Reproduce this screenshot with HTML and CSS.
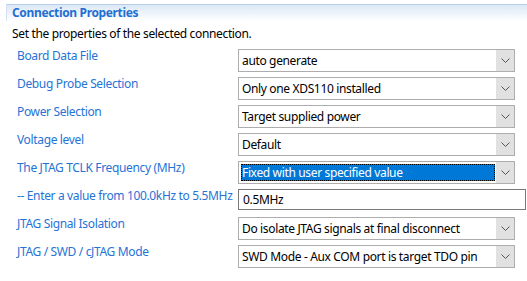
FILE: index.html
```html
<!DOCTYPE html>
<html lang="en">
<head>
    <meta charset="UTF-8">
    <title>Connection Properties</title>
    <link rel="stylesheet" href="styles.css">
</head>
<body>
    <div class="section">
        <div class="section-title">Connection Properties</div>
        <div class="desc">Set the properties of the selected connection.</div>
        <div class="form">
            <div class="label">Board Data File</div>
            <div class="combo"><span class="value">auto generate</span><span class="arrow"><svg width="9" height="5" viewBox="0 0 9 5"><path d="M0.5 0.5 L4.5 4.5 L8.5 0.5" fill="none" stroke="#555" stroke-width="1"/></svg></span></div>

            <div class="label">Debug Probe Selection</div>
            <div class="combo"><span class="value">Only one XDS110 installed</span><span class="arrow"><svg width="9" height="5" viewBox="0 0 9 5"><path d="M0.5 0.5 L4.5 4.5 L8.5 0.5" fill="none" stroke="#555" stroke-width="1"/></svg></span></div>

            <div class="label">Power Selection</div>
            <div class="combo"><span class="value">Target supplied power</span><span class="arrow"><svg width="9" height="5" viewBox="0 0 9 5"><path d="M0.5 0.5 L4.5 4.5 L8.5 0.5" fill="none" stroke="#555" stroke-width="1"/></svg></span></div>

            <div class="label">Voltage level</div>
            <div class="combo"><span class="value">Default</span><span class="arrow"><svg width="9" height="5" viewBox="0 0 9 5"><path d="M0.5 0.5 L4.5 4.5 L8.5 0.5" fill="none" stroke="#555" stroke-width="1"/></svg></span></div>

            <div class="label">The JTAG TCLK Frequency (MHz)</div>
            <div class="combo"><span class="value selected">Fixed with user specified value</span><span class="arrow"><svg width="9" height="5" viewBox="0 0 9 5"><path d="M0.5 0.5 L4.5 4.5 L8.5 0.5" fill="none" stroke="#555" stroke-width="1"/></svg></span></div>

            <div class="label">-- Enter a value from 100.0kHz to 5.5MHz</div>
            <div class="text-field">0.5MHz</div>

            <div class="label">JTAG Signal Isolation</div>
            <div class="combo"><span class="value">Do isolate JTAG signals at final disconnect</span><span class="arrow"><svg width="9" height="5" viewBox="0 0 9 5"><path d="M0.5 0.5 L4.5 4.5 L8.5 0.5" fill="none" stroke="#555" stroke-width="1"/></svg></span></div>

            <div class="label">JTAG / SWD / cJTAG Mode</div>
            <div class="combo"><span class="value">SWD Mode - Aux COM port is target TDO pin</span><span class="arrow"><svg width="9" height="5" viewBox="0 0 9 5"><path d="M0.5 0.5 L4.5 4.5 L8.5 0.5" fill="none" stroke="#555" stroke-width="1"/></svg></span></div>
        </div>
    </div>
</body>
</html>
```

FILE: styles.css
```css
body {
    margin: 0;
    background: #fff;
    font-family: 'Noto Sans', 'Open Sans', sans-serif;
    font-size: 12px;
    letter-spacing: -0.35px;
    color: #000;
}
.section {
    padding-top: 4px;
    padding-left: 6px;
}
.section-title {
    border-top: 1px solid #b7cfe8;
    border-left: 1px solid #d4e2f1;
    background: linear-gradient(#dce8f5, #ffffff);
    height: 16px;
    line-height: 16px;
    padding-left: 5px;
    font-weight: bold;
    color: #1f6fd2;
}
.desc {
    padding-left: 6px;
    margin-top: 5px;
    line-height: 16px;
}
.form {
    display: grid;
    grid-template-columns: 221px 277px;
    grid-auto-rows: 28px;
    margin-top: 7px;
    padding-left: 11px;
}
.label {
    color: #2673d6;
    line-height: 14px;
    white-space: nowrap;
}
.combo {
    display: flex;
    height: 23px;
    box-sizing: border-box;
    border: 1px solid #adadad;
    background: #fff;
}
.combo .value {
    flex: 1;
    padding-left: 3px;
    line-height: 21px;
    white-space: nowrap;
    overflow: hidden;
}
.combo .value.selected {
    margin: 2px 1px 2px 2px;
    padding-left: 1px;
    line-height: 17px;
    background: #0078d7;
    color: #fff;
    outline: 1px dotted #000;
    outline-offset: -1px;
}
.combo .arrow {
    width: 18px;
    background: #e1e1e1;
    display: flex;
    align-items: center;
    justify-content: center;
}
.text-field {
    width: 288px;
    height: 21px;
    box-sizing: border-box;
    border: 1px solid #7a7a7a;
    padding-left: 4px;
    line-height: 19px;
}
```
